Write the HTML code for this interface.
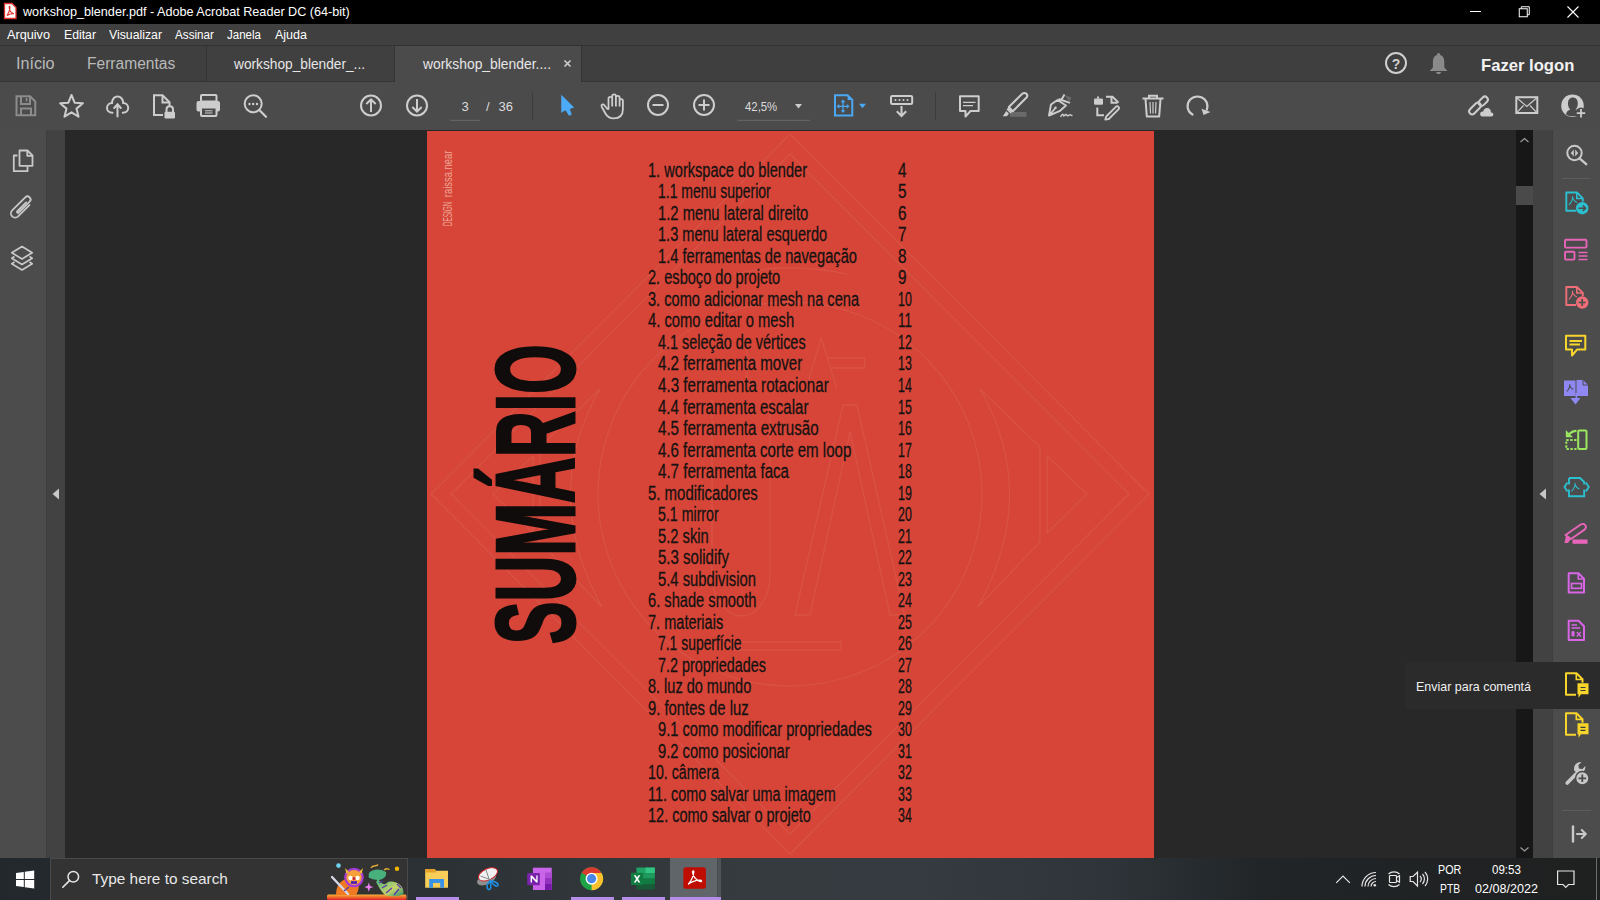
<!DOCTYPE html>
<html><head><meta charset="utf-8"><style>*{margin:0;padding:0;box-sizing:border-box}
html,body{width:1600px;height:900px;overflow:hidden;background:#282828;font-family:"Liberation Sans",sans-serif}
.a{position:absolute}
.t{white-space:nowrap;line-height:1}
svg.a{overflow:visible}
</style></head><body>
<div class="a" style="left:0px;top:0px;width:1600px;height:24px;background:#000;"></div>
<div class="a" style="left:0px;top:24px;width:1600px;height:21px;background:#404040;"></div>
<div class="a" style="left:0px;top:45px;width:1600px;height:1px;background:#333;"></div>
<div class="a" style="left:0px;top:46px;width:1600px;height:36px;background:#3f3f3f;"></div>
<div class="a" style="left:206px;top:46px;width:188px;height:36px;background:#404040;border-left:1px solid #343434;"></div>
<div class="a" style="left:394px;top:46px;width:188px;height:36px;background:#4b4b4b;border-left:1px solid #343434;border-right:1px solid #343434;"></div>
<div class="a" style="left:0px;top:81px;width:394px;height:1px;background:#343434;"></div>
<div class="a" style="left:582px;top:81px;width:1018px;height:1px;background:#343434;"></div>
<div class="a" style="left:0px;top:82px;width:1600px;height:48px;background:#4b4b4b;"></div>
<div class="a" style="left:0px;top:130px;width:46px;height:728px;background:#4c4c4c;"></div>
<div class="a" style="left:46px;top:130px;width:1px;height:728px;background:#3e3e3e;"></div>
<div class="a" style="left:47px;top:130px;width:18px;height:728px;background:#424242;"></div>
<div class="a" style="left:65px;top:130px;width:1450px;height:728px;background:#282828;"></div>
<div class="a" style="left:1516px;top:130px;width:17px;height:728px;background:#171717;"></div>
<div class="a" style="left:1516px;top:186px;width:17px;height:19px;background:#4a4a4a;"></div>
<div class="a" style="left:1533px;top:130px;width:19px;height:728px;background:#424242;"></div>
<div class="a" style="left:1552px;top:130px;width:1px;height:728px;background:#3e3e3e;"></div>
<div class="a" style="left:1553px;top:130px;width:47px;height:728px;background:#4c4c4c;"></div>
<div class="a" style="left:427px;top:131px;width:727px;height:727px;background:#d64537;overflow:hidden"></div>
<svg class="a" style="left:427px;top:131px" width="727" height="727" viewBox="427 131 727 727"><g fill="none" stroke="rgba(255,255,255,0.07)" stroke-width="1.3"><path d="M790,134 L1149,494 L790,854 L431,494 Z"/><path d="M790,154 L1129,494 L790,834 L451,494 Z"/><circle cx="790" cy="494" r="192"/><path d="M980,389 Q1040,494 978,607 M980,389 L1040,447 L1040,542 L978,607 M1047,456 L1087,494 L1047,533 Z"/><path d="M600,389 Q540,494 602,607 M600,389 L540,447 L540,542 L602,607 M533,456 L493,494 L533,533 Z"/><path d="M733,274 Q790,262 847,274"/><path d="M795,615 L843,405 H857 L904.5,615 H890 L850,432 L810,615 Z"/><path d="M712,400 V575 C712,600 728,616 741,616 C756,616 770,600 770,575 V400"/><path d="M806,388 L821.3,338 L836.7,388 M827,358 H864.7 V368 H830 M747,348 V388 M735,642 H841 V650 H735 Z"/></g></svg>
<div class="a t" style="left:647.8px;top:160.79px;font-size:19.5px;color:#141212;font-weight:400;transform:scaleX(0.7483);transform-origin:0 0;-webkit-text-stroke:0.28px #141212;">1. workspace do blender</div>
<div class="a t" style="left:898.3px;top:160.79px;font-size:19.5px;color:#141212;font-weight:400;transform:scaleX(0.7837);transform-origin:0 0;-webkit-text-stroke:0.28px #141212;">4</div>
<div class="a t" style="left:658.3px;top:182.31px;font-size:19.5px;color:#141212;font-weight:400;transform:scaleX(0.7170);transform-origin:0 0;-webkit-text-stroke:0.28px #141212;">1.1 menu superior</div>
<div class="a t" style="left:898.3px;top:182.31px;font-size:19.5px;color:#141212;font-weight:400;transform:scaleX(0.7837);transform-origin:0 0;-webkit-text-stroke:0.28px #141212;">5</div>
<div class="a t" style="left:658.3px;top:203.83px;font-size:19.5px;color:#141212;font-weight:400;transform:scaleX(0.7572);transform-origin:0 0;-webkit-text-stroke:0.28px #141212;">1.2 menu lateral direito</div>
<div class="a t" style="left:898.3px;top:203.83px;font-size:19.5px;color:#141212;font-weight:400;transform:scaleX(0.7837);transform-origin:0 0;-webkit-text-stroke:0.28px #141212;">6</div>
<div class="a t" style="left:658.3px;top:225.35px;font-size:19.5px;color:#141212;font-weight:400;transform:scaleX(0.7463);transform-origin:0 0;-webkit-text-stroke:0.28px #141212;">1.3 menu lateral esquerdo</div>
<div class="a t" style="left:898.3px;top:225.35px;font-size:19.5px;color:#141212;font-weight:400;transform:scaleX(0.7837);transform-origin:0 0;-webkit-text-stroke:0.28px #141212;">7</div>
<div class="a t" style="left:658.3px;top:246.87px;font-size:19.5px;color:#141212;font-weight:400;transform:scaleX(0.7523);transform-origin:0 0;-webkit-text-stroke:0.28px #141212;">1.4 ferramentas de navegação</div>
<div class="a t" style="left:898.3px;top:246.87px;font-size:19.5px;color:#141212;font-weight:400;transform:scaleX(0.7837);transform-origin:0 0;-webkit-text-stroke:0.28px #141212;">8</div>
<div class="a t" style="left:647.8px;top:268.39px;font-size:19.5px;color:#141212;font-weight:400;transform:scaleX(0.7481);transform-origin:0 0;-webkit-text-stroke:0.28px #141212;">2. esboço do projeto</div>
<div class="a t" style="left:898.3px;top:268.39px;font-size:19.5px;color:#141212;font-weight:400;transform:scaleX(0.7837);transform-origin:0 0;-webkit-text-stroke:0.28px #141212;">9</div>
<div class="a t" style="left:647.8px;top:289.91px;font-size:19.5px;color:#141212;font-weight:400;transform:scaleX(0.7487);transform-origin:0 0;-webkit-text-stroke:0.28px #141212;">3. como adicionar mesh na cena</div>
<div class="a t" style="left:898.3px;top:289.91px;font-size:19.5px;color:#141212;font-weight:400;transform:scaleX(0.6362);transform-origin:0 0;-webkit-text-stroke:0.28px #141212;">10</div>
<div class="a t" style="left:647.8px;top:311.43px;font-size:19.5px;color:#141212;font-weight:400;transform:scaleX(0.7578);transform-origin:0 0;-webkit-text-stroke:0.28px #141212;">4. como editar o mesh</div>
<div class="a t" style="left:898.3px;top:311.43px;font-size:19.5px;color:#141212;font-weight:400;transform:scaleX(0.6817);transform-origin:0 0;-webkit-text-stroke:0.28px #141212;">11</div>
<div class="a t" style="left:658.3px;top:332.95px;font-size:19.5px;color:#141212;font-weight:400;transform:scaleX(0.7400);transform-origin:0 0;-webkit-text-stroke:0.28px #141212;">4.1 seleção de vértices</div>
<div class="a t" style="left:898.3px;top:332.95px;font-size:19.5px;color:#141212;font-weight:400;transform:scaleX(0.6362);transform-origin:0 0;-webkit-text-stroke:0.28px #141212;">12</div>
<div class="a t" style="left:658.3px;top:354.47px;font-size:19.5px;color:#141212;font-weight:400;transform:scaleX(0.7735);transform-origin:0 0;-webkit-text-stroke:0.28px #141212;">4.2 ferramenta mover</div>
<div class="a t" style="left:898.3px;top:354.47px;font-size:19.5px;color:#141212;font-weight:400;transform:scaleX(0.6362);transform-origin:0 0;-webkit-text-stroke:0.28px #141212;">13</div>
<div class="a t" style="left:658.3px;top:375.99px;font-size:19.5px;color:#141212;font-weight:400;transform:scaleX(0.7796);transform-origin:0 0;-webkit-text-stroke:0.28px #141212;">4.3 ferramenta rotacionar</div>
<div class="a t" style="left:898.3px;top:375.99px;font-size:19.5px;color:#141212;font-weight:400;transform:scaleX(0.6362);transform-origin:0 0;-webkit-text-stroke:0.28px #141212;">14</div>
<div class="a t" style="left:658.3px;top:397.51px;font-size:19.5px;color:#141212;font-weight:400;transform:scaleX(0.7709);transform-origin:0 0;-webkit-text-stroke:0.28px #141212;">4.4 ferramenta escalar</div>
<div class="a t" style="left:898.3px;top:397.51px;font-size:19.5px;color:#141212;font-weight:400;transform:scaleX(0.6362);transform-origin:0 0;-webkit-text-stroke:0.28px #141212;">15</div>
<div class="a t" style="left:658.3px;top:419.03px;font-size:19.5px;color:#141212;font-weight:400;transform:scaleX(0.7762);transform-origin:0 0;-webkit-text-stroke:0.28px #141212;">4.5 ferramenta extrusão</div>
<div class="a t" style="left:898.3px;top:419.03px;font-size:19.5px;color:#141212;font-weight:400;transform:scaleX(0.6362);transform-origin:0 0;-webkit-text-stroke:0.28px #141212;">16</div>
<div class="a t" style="left:658.3px;top:440.55px;font-size:19.5px;color:#141212;font-weight:400;transform:scaleX(0.7720);transform-origin:0 0;-webkit-text-stroke:0.28px #141212;">4.6 ferramenta corte em loop</div>
<div class="a t" style="left:898.3px;top:440.55px;font-size:19.5px;color:#141212;font-weight:400;transform:scaleX(0.6362);transform-origin:0 0;-webkit-text-stroke:0.28px #141212;">17</div>
<div class="a t" style="left:658.3px;top:462.07px;font-size:19.5px;color:#141212;font-weight:400;transform:scaleX(0.7747);transform-origin:0 0;-webkit-text-stroke:0.28px #141212;">4.7 ferramenta faca</div>
<div class="a t" style="left:898.3px;top:462.07px;font-size:19.5px;color:#141212;font-weight:400;transform:scaleX(0.6362);transform-origin:0 0;-webkit-text-stroke:0.28px #141212;">18</div>
<div class="a t" style="left:647.8px;top:483.59px;font-size:19.5px;color:#141212;font-weight:400;transform:scaleX(0.7667);transform-origin:0 0;-webkit-text-stroke:0.28px #141212;">5. modificadores</div>
<div class="a t" style="left:898.3px;top:483.59px;font-size:19.5px;color:#141212;font-weight:400;transform:scaleX(0.6362);transform-origin:0 0;-webkit-text-stroke:0.28px #141212;">19</div>
<div class="a t" style="left:658.3px;top:505.11px;font-size:19.5px;color:#141212;font-weight:400;transform:scaleX(0.7275);transform-origin:0 0;-webkit-text-stroke:0.28px #141212;">5.1 mirror</div>
<div class="a t" style="left:898.3px;top:505.11px;font-size:19.5px;color:#141212;font-weight:400;transform:scaleX(0.6362);transform-origin:0 0;-webkit-text-stroke:0.28px #141212;">20</div>
<div class="a t" style="left:658.3px;top:526.63px;font-size:19.5px;color:#141212;font-weight:400;transform:scaleX(0.7544);transform-origin:0 0;-webkit-text-stroke:0.28px #141212;">5.2 skin</div>
<div class="a t" style="left:898.3px;top:526.63px;font-size:19.5px;color:#141212;font-weight:400;transform:scaleX(0.6362);transform-origin:0 0;-webkit-text-stroke:0.28px #141212;">21</div>
<div class="a t" style="left:658.3px;top:548.15px;font-size:19.5px;color:#141212;font-weight:400;transform:scaleX(0.7696);transform-origin:0 0;-webkit-text-stroke:0.28px #141212;">5.3 solidify</div>
<div class="a t" style="left:898.3px;top:548.15px;font-size:19.5px;color:#141212;font-weight:400;transform:scaleX(0.6362);transform-origin:0 0;-webkit-text-stroke:0.28px #141212;">22</div>
<div class="a t" style="left:658.3px;top:569.67px;font-size:19.5px;color:#141212;font-weight:400;transform:scaleX(0.7589);transform-origin:0 0;-webkit-text-stroke:0.28px #141212;">5.4 subdivision</div>
<div class="a t" style="left:898.3px;top:569.67px;font-size:19.5px;color:#141212;font-weight:400;transform:scaleX(0.6362);transform-origin:0 0;-webkit-text-stroke:0.28px #141212;">23</div>
<div class="a t" style="left:647.8px;top:591.19px;font-size:19.5px;color:#141212;font-weight:400;transform:scaleX(0.7519);transform-origin:0 0;-webkit-text-stroke:0.28px #141212;">6. shade smooth</div>
<div class="a t" style="left:898.3px;top:591.19px;font-size:19.5px;color:#141212;font-weight:400;transform:scaleX(0.6362);transform-origin:0 0;-webkit-text-stroke:0.28px #141212;">24</div>
<div class="a t" style="left:647.8px;top:612.71px;font-size:19.5px;color:#141212;font-weight:400;transform:scaleX(0.7461);transform-origin:0 0;-webkit-text-stroke:0.28px #141212;">7. materiais</div>
<div class="a t" style="left:898.3px;top:612.71px;font-size:19.5px;color:#141212;font-weight:400;transform:scaleX(0.6362);transform-origin:0 0;-webkit-text-stroke:0.28px #141212;">25</div>
<div class="a t" style="left:658.3px;top:634.23px;font-size:19.5px;color:#141212;font-weight:400;transform:scaleX(0.7133);transform-origin:0 0;-webkit-text-stroke:0.28px #141212;">7.1 superfície</div>
<div class="a t" style="left:898.3px;top:634.23px;font-size:19.5px;color:#141212;font-weight:400;transform:scaleX(0.6362);transform-origin:0 0;-webkit-text-stroke:0.28px #141212;">26</div>
<div class="a t" style="left:658.3px;top:655.75px;font-size:19.5px;color:#141212;font-weight:400;transform:scaleX(0.7372);transform-origin:0 0;-webkit-text-stroke:0.28px #141212;">7.2 propriedades</div>
<div class="a t" style="left:898.3px;top:655.75px;font-size:19.5px;color:#141212;font-weight:400;transform:scaleX(0.6362);transform-origin:0 0;-webkit-text-stroke:0.28px #141212;">27</div>
<div class="a t" style="left:647.8px;top:677.27px;font-size:19.5px;color:#141212;font-weight:400;transform:scaleX(0.7437);transform-origin:0 0;-webkit-text-stroke:0.28px #141212;">8. luz do mundo</div>
<div class="a t" style="left:898.3px;top:677.27px;font-size:19.5px;color:#141212;font-weight:400;transform:scaleX(0.6362);transform-origin:0 0;-webkit-text-stroke:0.28px #141212;">28</div>
<div class="a t" style="left:647.8px;top:698.79px;font-size:19.5px;color:#141212;font-weight:400;transform:scaleX(0.7607);transform-origin:0 0;-webkit-text-stroke:0.28px #141212;">9. fontes de luz</div>
<div class="a t" style="left:898.3px;top:698.79px;font-size:19.5px;color:#141212;font-weight:400;transform:scaleX(0.6362);transform-origin:0 0;-webkit-text-stroke:0.28px #141212;">29</div>
<div class="a t" style="left:658.3px;top:720.31px;font-size:19.5px;color:#141212;font-weight:400;transform:scaleX(0.7532);transform-origin:0 0;-webkit-text-stroke:0.28px #141212;">9.1 como modificar propriedades</div>
<div class="a t" style="left:898.3px;top:720.31px;font-size:19.5px;color:#141212;font-weight:400;transform:scaleX(0.6362);transform-origin:0 0;-webkit-text-stroke:0.28px #141212;">30</div>
<div class="a t" style="left:658.3px;top:741.83px;font-size:19.5px;color:#141212;font-weight:400;transform:scaleX(0.7547);transform-origin:0 0;-webkit-text-stroke:0.28px #141212;">9.2 como posicionar</div>
<div class="a t" style="left:898.3px;top:741.83px;font-size:19.5px;color:#141212;font-weight:400;transform:scaleX(0.6362);transform-origin:0 0;-webkit-text-stroke:0.28px #141212;">31</div>
<div class="a t" style="left:647.8px;top:763.35px;font-size:19.5px;color:#141212;font-weight:400;transform:scaleX(0.7289);transform-origin:0 0;-webkit-text-stroke:0.28px #141212;">10. câmera</div>
<div class="a t" style="left:898.3px;top:763.35px;font-size:19.5px;color:#141212;font-weight:400;transform:scaleX(0.6362);transform-origin:0 0;-webkit-text-stroke:0.28px #141212;">32</div>
<div class="a t" style="left:647.8px;top:784.87px;font-size:19.5px;color:#141212;font-weight:400;transform:scaleX(0.7384);transform-origin:0 0;-webkit-text-stroke:0.28px #141212;">11. como salvar uma imagem</div>
<div class="a t" style="left:898.3px;top:784.87px;font-size:19.5px;color:#141212;font-weight:400;transform:scaleX(0.6362);transform-origin:0 0;-webkit-text-stroke:0.28px #141212;">33</div>
<div class="a t" style="left:647.8px;top:806.39px;font-size:19.5px;color:#141212;font-weight:400;transform:scaleX(0.7440);transform-origin:0 0;-webkit-text-stroke:0.28px #141212;">12. como salvar o projeto</div>
<div class="a t" style="left:898.3px;top:806.39px;font-size:19.5px;color:#141212;font-weight:400;transform:scaleX(0.6362);transform-origin:0 0;-webkit-text-stroke:0.28px #141212;">34</div>
<svg class="a" style="left:0;top:0" width="1600" height="900" viewBox="0 0 1600 900"><text transform="translate(574.1,643.9) rotate(-90) scale(0.5740,1)" font-family="Liberation Sans" font-weight="700" font-size="110.5" fill="#0f0c0b" stroke="#0f0c0b" stroke-width="3">SUMÁRIO</text><text transform="translate(451.9,226) rotate(-90) scale(0.5030,1)" font-family="Liberation Sans" font-size="12.6" fill="#efa598">DESIGN</text><text transform="translate(451.9,197.2) rotate(-90) scale(0.7375,1)" font-family="Liberation Sans" font-size="12.8" fill="#efa598">raissa.near</text></svg>
<div class="a" style="left:1405px;top:662px;width:195px;height:47px;background:#2b2b2b;border-radius:4px 0 0 4px;"></div>
<div class="a" style="left:0px;top:858px;width:1600px;height:42px;background:linear-gradient(90deg,#22282b 0px,#272d30 300px,#353b3f 750px,#353b40 920px,#2e3439 1110px,#212528 1260px,#1f2020 1600px);"></div>
<div class="a" style="left:50px;top:858px;width:358px;height:42px;background:#333333;border:1px solid #4a4a4a;border-bottom:none;"></div>
<div class="a" style="left:670px;top:858px;width:47px;height:42px;background:#5f6568;"></div>
<div class="a" style="left:717px;top:858px;width:1px;height:42px;background:#474c50;"></div>
<div class="a" style="left:718px;top:858px;width:3px;height:42px;background:#4f5458;"></div>
<div class="a" style="left:416px;top:897px;width:43px;height:3px;background:#b48ee9;"></div>
<div class="a" style="left:571px;top:897px;width:43px;height:3px;background:#b48ee9;"></div>
<div class="a" style="left:622px;top:897px;width:43px;height:3px;background:#b48ee9;"></div>
<div class="a" style="left:670px;top:897px;width:51px;height:3px;background:#b48ee9;"></div>
<div class="a" style="left:1595.5px;top:858px;width:1px;height:42px;background:#6e6e6e;"></div>
<div class="a t" style="left:22.5px;top:5.83px;font-size:12.6px;color:#fff;font-weight:400;transform:scaleX(1.0018);transform-origin:0 0;">workshop_blender.pdf - Adobe Acrobat Reader DC (64-bit)</div>
<div class="a t" style="left:7px;top:28.92px;font-size:12.5px;color:#fff;font-weight:400;transform:scaleX(1.0145);transform-origin:0 0;">Arquivo</div>
<div class="a t" style="left:64px;top:28.92px;font-size:12.5px;color:#fff;font-weight:400;transform:scaleX(0.9799);transform-origin:0 0;">Editar</div>
<div class="a t" style="left:109px;top:28.92px;font-size:12.5px;color:#fff;font-weight:400;transform:scaleX(0.9821);transform-origin:0 0;">Visualizar</div>
<div class="a t" style="left:175px;top:28.92px;font-size:12.5px;color:#fff;font-weight:400;transform:scaleX(0.9356);transform-origin:0 0;">Assinar</div>
<div class="a t" style="left:227px;top:28.92px;font-size:12.5px;color:#fff;font-weight:400;transform:scaleX(0.9230);transform-origin:0 0;">Janela</div>
<div class="a t" style="left:275px;top:28.92px;font-size:12.5px;color:#fff;font-weight:400;transform:scaleX(1.0009);transform-origin:0 0;">Ajuda</div>
<div class="a t" style="left:16.2px;top:55.56px;font-size:16px;color:#b9b9b9;font-weight:400;transform:scaleX(1.0093);transform-origin:0 0;">Início</div>
<div class="a t" style="left:87.4px;top:55.56px;font-size:16px;color:#b9b9b9;font-weight:400;transform:scaleX(0.9725);transform-origin:0 0;">Ferramentas</div>
<div class="a t" style="left:234px;top:57.23px;font-size:14.5px;color:#e6e6e6;font-weight:400;transform:scaleX(0.9449);transform-origin:0 0;">workshop_blender_...</div>
<div class="a t" style="left:423px;top:57.23px;font-size:14.5px;color:#e6e6e6;font-weight:400;transform:scaleX(0.9566);transform-origin:0 0;">workshop_blender....</div>
<div class="a t" style="left:1480.7px;top:56.93px;font-size:16.5px;color:#f2f2f2;font-weight:700;transform:scaleX(1.0077);transform-origin:0 0;">Fazer logon</div>
<div class="a t" style="left:461.5px;top:99.70px;font-size:13px;color:#dcdcdc;font-weight:400;">3</div>
<div class="a t" style="left:486px;top:99.70px;font-size:13px;color:#dcdcdc;font-weight:400;">/</div>
<div class="a t" style="left:498.6px;top:99.70px;font-size:13px;color:#dcdcdc;font-weight:400;">36</div>
<div class="a t" style="left:745px;top:99.70px;font-size:13px;color:#dcdcdc;font-weight:400;transform:scaleX(0.8735);transform-origin:0 0;">42,5%</div>
<div class="a t" style="left:1416px;top:680.00px;font-size:13px;color:#f0f0f0;font-weight:400;transform:scaleX(0.9587);transform-origin:0 0;">Enviar para comentá</div>
<div class="a t" style="left:92.25px;top:872.06px;font-size:14.4px;color:#e8e8e8;font-weight:400;transform:scaleX(1.0685);transform-origin:0 0;">Type here to search</div>
<div class="a t" style="left:1437.6px;top:864.02px;font-size:12.5px;color:#fff;font-weight:400;transform:scaleX(0.8602);transform-origin:0 0;">POR</div>
<div class="a t" style="left:1439.9px;top:882.57px;font-size:12.5px;color:#fff;font-weight:400;transform:scaleX(0.8268);transform-origin:0 0;">PTB</div>
<div class="a t" style="left:1491.5px;top:864.02px;font-size:12.5px;color:#fff;font-weight:400;transform:scaleX(0.9239);transform-origin:0 0;">09:53</div>
<div class="a t" style="left:1474.9px;top:882.57px;font-size:12.5px;color:#fff;font-weight:400;transform:scaleX(1.0070);transform-origin:0 0;">02/08/2022</div>
<svg class="a" style="left:0;top:0" width="1600" height="900" viewBox="0 0 1600 900"><path d="M4.5,3.5 H12 L16,7.5 V18.5 H4.5 Z" fill="#fff" stroke="#e0332e" stroke-width="1.3"/><path d="M7,15.5 C8.5,13 10,9.5 10,7.2 C10,6 9.2,6 9.2,7.2 C9.3,10 11,13 14,13.8 C12,13.5 9,14 7,15.5 Z" fill="none" stroke="#e0332e" stroke-width="1.1"/><path d="M1470,11.5 H1481" stroke="#fff" stroke-width="1"/><rect x="1519.25" y="8.75" width="8" height="8" fill="none" stroke="#fff" stroke-width="1"/><path d="M1521.25,8.75 V6.75 H1529.25 V14.75 H1527.25" fill="none" stroke="#fff" stroke-width="1"/><path d="M1567.5,6.5 L1578.5,17.5 M1578.5,6.5 L1567.5,17.5" stroke="#fff" stroke-width="1.1"/><path d="M564.5,60.5 L570.5,66.5 M570.5,60.5 L564.5,66.5" stroke="#cfcfcf" stroke-width="1.6"/><circle cx="1396" cy="63" r="10" fill="none" stroke="#cfcfcf" stroke-width="2"/><text x="1396" y="68.5" font-family="Liberation Sans" font-weight="700" font-size="14" fill="#cfcfcf" text-anchor="middle">?</text><path d="M1438.6,53 C1439.8,53 1440.2,54 1440.2,55 C1443.5,56 1444.3,59 1444.3,62.5 V67.5 L1447.6,71 H1429.6 L1432.9,67.5 V62.5 C1432.9,59 1433.7,56 1437,55 C1437,54 1437.4,53 1438.6,53 Z" fill="#8a8a8a"/><path d="M1436.2,72 H1441 C1441,73.5 1440,74 1438.6,74 C1437.2,74 1436.2,73.5 1436.2,72 Z" fill="#8a8a8a"/><g fill="none" stroke="#8c8c8c" stroke-width="2"><path d="M16.5,96.25 H30 L35.25,101.5 V115.25 H16.5 Z"/><path d="M21,96.5 V104 H30 V96.5"/><path d="M21,115 V108.5 H31 V115"/></g><rect x="25.8" y="98" width="1.6" height="3.5" fill="#8c8c8c"/><path d="M71.50,95.00 L74.62,102.71 L82.91,103.29 L76.54,108.64 L78.55,116.71 L71.50,112.30 L64.45,116.71 L66.46,108.64 L60.09,103.29 L68.38,102.71 Z" fill="none" stroke="#cdcdcd" stroke-width="2" stroke-linejoin="round"/><g fill="none" stroke="#cdcdcd" stroke-width="2" stroke-linecap="round"><path d="M112.5,112.8 C108.5,112.8 107,110 107,108 C107,105 109.3,103 112,103 C112,99 114.7,96.5 117.5,96.5 C120.5,96.5 123.2,99 123.2,103 C126,103 128.2,105 128.2,108 C128.2,110.5 126.3,112.8 122.8,112.8"/><path d="M117.5,116.5 V104.5 M114.2,108 L117.5,104.3 L120.8,108"/></g><g fill="none" stroke="#cdcdcd" stroke-width="2"><path d="M163,115 H154 V95.25 H162.5 L169.5,102.2 V106"/><path d="M162.5,95.5 V102.5 H169.5"/></g><rect x="164.5" y="111.8" width="10.5" height="6.7" rx="1" fill="#cdcdcd"/><path d="M166.5,112 V109.5 C166.5,107.5 168,106.3 169.75,106.3 C171.5,106.3 173,107.5 173,109.5 V112" fill="none" stroke="#cdcdcd" stroke-width="2"/><g fill="none" stroke="#cdcdcd" stroke-width="2"><rect x="201" y="95" width="15.5" height="6.5" rx="1"/><rect x="201" y="107.5" width="15.5" height="8.5" rx="1"/></g><path d="M198.5,101 H218 A2,2 0 0 1 220,103 V109.5 A2,2 0 0 1 218,111.5 H216.5 V107 H201 V111.5 H198.5 A2,2 0 0 1 196.5,109.5 V103 A2,2 0 0 1 198.5,101 Z" fill="#cdcdcd"/><path d="M205,110.8 H212.5 M205,113 H212.5" stroke="#cdcdcd" stroke-width="1"/><circle cx="253.2" cy="103.8" r="8.5" fill="none" stroke="#cdcdcd" stroke-width="2"/><path d="M259.3,110 L266,116.8" stroke="#cdcdcd" stroke-width="2.2" stroke-linecap="round"/><g fill="#cdcdcd"><circle cx="249.5" cy="104" r="1.2"/><circle cx="253.2" cy="104" r="1.2"/><circle cx="257" cy="104" r="1.2"/></g><circle cx="371" cy="105.5" r="10" fill="none" stroke="#cdcdcd" stroke-width="2"/><path d="M371,112 V99.5 M366.3,104 L371,99.5 L375.7,104" fill="none" stroke="#cdcdcd" stroke-width="2"/><circle cx="417" cy="105.5" r="10" fill="none" stroke="#cdcdcd" stroke-width="2"/><path d="M417,99 V111.5 M412.3,107 L417,111.5 L421.7,107" fill="none" stroke="#cdcdcd" stroke-width="2"/><path d="M450,120.3 H480" stroke="#6a6a6a" stroke-width="1"/><path d="M532.5,92 V120" stroke="#3c3c3c" stroke-width="1"/><path d="M561.25,94.75 V112.75 L565.5,110.2 L569,115.8 L571.8,114.4 L569.8,109 L574.2,107.4 Z" fill="#4daaf7"/><path d="M607.8,109.5 L604.2,105 C603,103.6 600.8,104.8 601.7,106.7 L605.6,113.8 C607.3,117 609.7,118.4 613.6,118.4 C619.5,118.4 622.9,115 622.9,109.2 V100.8 C622.9,98.6 619.6,98.6 619.6,100.8 V106.5 M619.6,106.5 V97.6 C619.6,95.4 615.9,95.4 615.9,97.6 V106.5 M615.9,106.5 V96 C615.9,93.8 612.2,93.8 612.2,96 V106.5 M612.2,106.5 V98.6 C612.2,96.4 608.5,96.4 608.5,98.6 V109.8" fill="none" stroke="#cdcdcd" stroke-width="1.8" stroke-linejoin="round"/><circle cx="658" cy="105" r="10" fill="none" stroke="#cdcdcd" stroke-width="2"/><path d="M652.5,105 H663.5" stroke="#cdcdcd" stroke-width="2"/><circle cx="704" cy="105" r="10" fill="none" stroke="#cdcdcd" stroke-width="2"/><path d="M698.5,105 H709.5 M704,99.5 V110.5" stroke="#cdcdcd" stroke-width="2"/><path d="M737.5,120.3 H810" stroke="#6a6a6a" stroke-width="1"/><path d="M795,104 H802 L798.5,108.5 Z" fill="#cdcdcd"/><path d="M835,95.2 H847.6 L852.3,100 V115.4 H835 Z" fill="none" stroke="#4aa8f5" stroke-width="2"/><path d="M847.6,95.2 V100 H852.3" fill="#4aa8f5"/><g stroke="#4aa8f5" stroke-width="1.3" fill="none"><path d="M843,101.5 V111 M838.5,106.3 H847.6"/></g><g fill="#4aa8f5"><path d="M840.6,102.3 L843,99.6 L845.4,102.3 Z"/><path d="M840.6,110.3 L843,113 L845.4,110.3 Z"/><path d="M839.3,103.9 L836.6,106.3 L839.3,108.7 Z"/><path d="M846.8,103.9 L849.5,106.3 L846.8,108.7 Z"/></g><path d="M859,103.8 H866 L862.5,108.3 Z" fill="#4aa8f5"/><rect x="891" y="96" width="21.2" height="8" rx="1.3" fill="none" stroke="#cdcdcd" stroke-width="2"/><g fill="#cdcdcd"><circle cx="895.5" cy="100" r="1"/><circle cx="899.5" cy="100" r="1"/><circle cx="903.5" cy="100" r="1"/><circle cx="907.5" cy="100" r="1"/></g><path d="M901.5,106 V116 M896.8,111.3 L901.5,116 L906.2,111.3" fill="none" stroke="#cdcdcd" stroke-width="2"/><path d="M935.5,92 V120" stroke="#3c3c3c" stroke-width="1"/><path d="M960,96.3 H978.7 V111 H970.5 L965.5,116.5 V111 H960 Z" fill="none" stroke="#cdcdcd" stroke-width="2" stroke-linejoin="round"/><path d="M963,102.3 H975.5 M963,105.6 H973" stroke="#cdcdcd" stroke-width="1.2"/><path d="M1010,112 H1026.5 V116.8 H1010 Z" fill="#6a6a6a"/><path d="M1008.8,107 L1022.3,93.8 C1023.5,92.6 1025.3,92.6 1026.4,93.8 C1027.5,95 1027.5,96.6 1026.3,97.8 L1012.8,111.2 Z" fill="none" stroke="#cdcdcd" stroke-width="2" stroke-linejoin="round"/><path d="M1008.8,107 L1012.8,111.2 L1010.5,113.5 L1006.5,109.5 Z M1006.3,111 L1009,113.8 L1006.8,116.3 L1002.8,116.3 Z" fill="#cdcdcd"/><path d="M1064.5,94.5 L1061,100.5 M1058.5,99 L1070,102.8 M1057.5,100 L1051,104.5 L1049,115.5 L1059.5,111.2 L1066,105.5 Z M1049.5,115 L1055,108.5" fill="none" stroke="#cdcdcd" stroke-width="1.9" stroke-linejoin="round"/><path d="M1065,95 L1071.5,97.5 L1069,102 Z" fill="#6a6a6a"/><circle cx="1055.5" cy="107.7" r="1.3" fill="#cdcdcd"/><path d="M1060.5,116.8 C1062,114 1063,113.5 1063.5,115.5 C1064,117 1065,114 1066,114.5 C1067,115 1067.5,117 1069,115 C1070,114 1071,115.5 1072.5,115.5" fill="none" stroke="#cdcdcd" stroke-width="1.4"/><path d="M1106,96.8 H1112.5 L1118.5,102.6" fill="none" stroke="#cdcdcd" stroke-width="2"/><path d="M1111.5,96.5 V102.8 H1117.5" fill="none" stroke="#cdcdcd" stroke-width="2"/><rect x="1094" y="98.6" width="9" height="6.2" rx="1.3" fill="#cdcdcd"/><path d="M1098,96.5 V98.6" stroke="#cdcdcd" stroke-width="2"/><path d="M1097.3,107.5 V115.3 H1104" fill="none" stroke="#cdcdcd" stroke-width="2"/><path d="M1106.2,116.5 L1115.8,106.8 C1116.6,106 1117.8,106 1118.5,106.8 C1119.2,107.5 1119.2,108.6 1118.4,109.4 L1108.8,119 L1105.3,119.6 Z" fill="none" stroke="#cdcdcd" stroke-width="1.8" stroke-linejoin="round"/><path d="M1142.5,98.5 H1163.5" stroke="#cdcdcd" stroke-width="2"/><path d="M1149,98 V95.8 H1157 V98" fill="none" stroke="#cdcdcd" stroke-width="2"/><path d="M1145.5,99 L1146.8,116.5 H1159.2 L1160.5,99" fill="none" stroke="#cdcdcd" stroke-width="2" stroke-linejoin="round"/><path d="M1150,102 L1150.5,113.5 M1153,102 V113.5 M1156,102 L1155.5,113.5" stroke="#cdcdcd" stroke-width="1.2"/><path d="M1192.5,114.5 C1189.5,112.8 1187.6,109.8 1187.6,106.3 C1187.6,100.8 1192,96.5 1197.5,96.5 C1203,96.5 1207.4,100.8 1207.4,106.3 C1207.4,107.5 1207.2,108.6 1206.8,109.6" fill="none" stroke="#cdcdcd" stroke-width="2.2" stroke-linecap="round"/><path d="M1201.5,108.8 L1210.5,112 L1203.5,115 Z" fill="#cdcdcd"/><g fill="none" stroke="#cdcdcd" stroke-width="2"><rect x="1478" y="98.2" width="10.5" height="6" rx="3" transform="rotate(-45 1483.25 101.2)"/><rect x="1468" y="105.5" width="14" height="6" rx="3" transform="rotate(-45 1475 108.5)"/></g><path d="M1482,117 H1491.5 C1493,117 1494,116 1494,114.5 C1494,113 1493,112 1491.5,112 C1491.5,109.5 1489.5,107.5 1487,107.5 C1484.8,107.5 1483.3,109 1482.8,110.8 C1481,110.8 1479.5,112 1479.5,114 C1479.5,115.8 1480.5,117 1482,117 Z" fill="#cdcdcd" stroke="#4b4b4b" stroke-width="1.2"/><rect x="1516.3" y="97.2" width="21" height="15.8" fill="none" stroke="#cdcdcd" stroke-width="2"/><path d="M1517,98 L1526.8,106.5 L1536.6,98 M1517,112.3 L1523.5,105.5 M1536.6,112.3 L1530,105.5" fill="none" stroke="#cdcdcd" stroke-width="1.2"/><circle cx="1572.5" cy="105.8" r="11.3" fill="#cdcdcd"/><path d="M1566,114.5 C1566.3,111.5 1568,110.2 1570.3,109.4 C1568.6,108 1568,106 1568,103.3 C1568,99.7 1570.2,97.6 1572.9,97.6 C1575.6,97.6 1577.8,99.7 1577.8,103.3 C1577.8,106 1577.2,108 1575.5,109.4 C1577.8,110.2 1580,111.5 1580.6,114.5 C1578.5,115.8 1575.8,116.3 1572.9,116.3 C1570,116.3 1567.8,115.8 1566,114.5 Z" fill="#4b4b4b"/><circle cx="1581" cy="113.2" r="5.6" fill="#4b4b4b"/><path d="M1576.8,113.2 H1585.2 M1581,109 V117.4" stroke="#cdcdcd" stroke-width="1.8"/><g fill="none" stroke="#c8c8c8" stroke-width="1.8" stroke-linejoin="round"><path d="M17.5,155.5 H13.8 V171.2 H27.5 V166.5"/><path d="M19.5,150.5 H27.5 L32.5,155.5 V165.8 H19.5 Z"/><path d="M27.3,150.5 V155.8 H32.5"/></g><path transform="translate(21.5,207) rotate(-45)" d="M7,4.2 H-9 A4.2,4.2 0 0 1 -9,-4.2 H9.5 A3.1,3.1 0 0 1 9.5,2 H-6 A1,1 0 0 1 -6,0 H6.5" fill="none" stroke="#c8c8c8" stroke-width="1.8" stroke-linecap="round"/><g fill="none" stroke="#c8c8c8" stroke-width="1.7" stroke-linejoin="round"><path d="M22,246.5 L32.2,252.7 L22,258.9 L11.8,252.7 Z"/><path d="M14.5,256.5 L11.8,258.2 L22,264.4 L32.2,258.2 L29.5,256.5"/><path d="M14.5,262 L11.8,263.7 L22,269.9 L32.2,263.7 L29.5,262"/></g><path d="M59,488.5 V499.5 L52.5,494 Z" fill="#c8c8c8"/><path d="M1520.5,142 L1524.5,138.5 L1528.5,142 M1520.5,847.5 L1524.5,851 L1528.5,847.5" fill="none" stroke="#9a9a9a" stroke-width="1.2"/><path d="M1546,488.5 V499.5 L1539.5,494 Z" fill="#c8c8c8"/><circle cx="1574.5" cy="153" r="7.2" fill="none" stroke="#c8c8c8" stroke-width="2"/><path d="M1579.5,158.3 L1586.2,164.2" stroke="#c8c8c8" stroke-width="2.4" stroke-linecap="round"/><path d="M1573.8,149.5 L1570.8,153 L1573.8,156.5 Z M1575.2,149.5 L1578.2,153 L1575.2,156.5 Z" fill="#c8c8c8"/><path d="M1562,178.5 H1590.5" stroke="#5c5c5c" stroke-width="1"/><path d="M1576,210.8 H1566.3 V192.5 H1577 L1582.8,198.3 V201.5" fill="none" stroke="#2cbfd0" stroke-width="1.9" stroke-linejoin="round"/><path d="M1576.8,192.5 V198.5 H1582.8" fill="none" stroke="#2cbfd0" stroke-width="1.6"/><path d="M1569,205 C1571.5,202 1573,198.5 1572.5,196.3 C1572.2,198.3 1574,201.5 1577,202.5" fill="none" stroke="#2cbfd0" stroke-width="1.1"/><circle cx="1582.2" cy="208.2" r="6.2" fill="#2cbfd0"/><path d="M1578.5,208.2 H1585 M1582.8,205.5 L1585.5,208.2 L1582.8,210.9" fill="none" stroke="#4c4c4c" stroke-width="1.6"/><g fill="none" stroke="#e864b8" stroke-width="1.9"><rect x="1565" y="239.8" width="21.5" height="7.8" rx="1"/><rect x="1565" y="251.8" width="9.5" height="7.8" rx="1"/></g><path d="M1578.5,252.5 H1587.5 M1578.5,256 H1587.5 M1578.5,259.5 H1587.5" stroke="#e864b8" stroke-width="1.3"/><path d="M1576,305 H1566.3 V287 H1577 L1582.8,292.8 V296" fill="none" stroke="#f06e78" stroke-width="1.9" stroke-linejoin="round"/><path d="M1576.8,287 V293 H1582.8" fill="none" stroke="#f06e78" stroke-width="1.6"/><path d="M1569,299.5 C1571.5,296.5 1573,293 1572.5,290.8 C1572.2,292.8 1574,296 1577,297" fill="none" stroke="#f06e78" stroke-width="1.1"/><circle cx="1582.2" cy="302.5" r="6.2" fill="#f06e78"/><path d="M1578.7,302.5 H1585.7 M1582.2,299 V306" stroke="#4c4c4c" stroke-width="1.7"/><path d="M1566,335.8 H1585.3 V349.6 H1577 L1572,355.5 V349.6 H1566 Z" fill="none" stroke="#f7d52b" stroke-width="2" stroke-linejoin="round"/><path d="M1569.5,341 H1582 M1569.5,344.5 H1580" stroke="#f7d52b" stroke-width="1.8"/><path d="M1564,380.5 H1575.5 V396 H1564 Z" fill="#8f87f2"/><path d="M1567,391.5 C1569,389 1570,386 1569.8,384.3 C1569.6,386 1571,388.5 1573.3,389.3" fill="none" stroke="#4c4c4c" stroke-width="1.1"/><path d="M1576.5,380 H1583 L1588,385 V396 H1576.5 Z" fill="#8f87f2"/><path d="M1583,380 V385 H1588" fill="none" stroke="#4c4c4c" stroke-width="1"/><path d="M1575.5,393 V398 H1570.5 L1575.5,404.4 L1580.5,398 H1577.3 V393 Z" fill="#8f87f2"/><rect x="1578.2" y="430.4" width="8.3" height="18.6" rx="1" fill="none" stroke="#9ae65e" stroke-width="2"/><path d="M1576.5,439.9 H1566.3 V449 H1576.5" fill="none" stroke="#9ae65e" stroke-width="2" stroke-dasharray="2.4,1.5"/><path d="M1565.8,430 L1565.8,437.3 L1573,437.3 Z" fill="#9ae65e"/><path d="M1568.5,434.8 Q1572,430.8 1576.5,430.8" fill="none" stroke="#9ae65e" stroke-width="2.2"/><path d="M1569,478 H1580 L1584.2,482 V484.5 M1584.2,489.5 V496.3 H1569 V489.5 M1569,484.5 V478" fill="none" stroke="#2cbfd0" stroke-width="1.9"/><path d="M1567.5,482.5 L1564.5,487 L1567.5,491.5 M1585.8,482.5 L1588.8,487 L1585.8,491.5" fill="none" stroke="#2cbfd0" stroke-width="1.9"/><path d="M1571.5,491.5 C1574,488.5 1575.5,485 1575,483 C1574.7,485 1576.5,488 1579.5,489" fill="none" stroke="#2cbfd0" stroke-width="1.1"/><path d="M1565.5,535 L1580.8,524.5 C1582.3,523.5 1584.3,523.8 1585.3,525.3 C1586.3,526.8 1586,528.7 1584.5,529.7 L1571,539 Z" fill="none" stroke="#e864b8" stroke-width="2" stroke-linejoin="round"/><path d="M1566,535.5 L1570.5,539.5 L1568,543 H1564.5 Z" fill="#e864b8"/><path d="M1572.5,539.5 H1587.5 V543.8 H1572.5 Z" fill="#e864b8"/><path d="M1568.7,573.3 H1578.5 L1584,578.8 V592.4 H1568.7 Z" fill="none" stroke="#d865e6" stroke-width="2" stroke-linejoin="round"/><path d="M1578.3,573.5 V579 H1583.8" fill="none" stroke="#d865e6" stroke-width="1.6"/><rect x="1571.5" y="583.5" width="10" height="4.8" fill="none" stroke="#d865e6" stroke-width="1.7"/><path d="M1568.7,620.8 H1578.5 L1584,626.3 V639.9 H1568.7 Z" fill="none" stroke="#d865e6" stroke-width="2" stroke-linejoin="round"/><path d="M1571.5,625 H1577 M1571.5,628 H1580" stroke="#d865e6" stroke-width="1.3"/><rect x="1571.5" y="631" width="3" height="5.5" rx="1.2" fill="#d865e6"/><path d="M1576.8,632 L1580.8,636.5 M1580.8,632 L1576.8,636.5" stroke="#d865e6" stroke-width="1.3"/><path d="M1576,694.8 H1566 V673.3 H1576.5 L1582.5,679.3 V682.8" fill="none" stroke="#f7d52b" stroke-width="2" stroke-linejoin="round"/><path d="M1576.3,673.3 V679.5 H1582.5" fill="none" stroke="#f7d52b" stroke-width="1.6"/><path d="M1577.5,683.3 H1588.5 V694.3 H1581 L1578.5,697.8 V694.3 H1577.5 Z" fill="#f7d52b"/><path d="M1580.5,687.5 H1585.5 M1580.5,690.5 H1585.5" stroke="#3a3a3a" stroke-width="1.1"/><path d="M1576,734.7 H1566 V713.2 H1576.5 L1582.5,719.2 V722.7" fill="none" stroke="#f7d52b" stroke-width="2" stroke-linejoin="round"/><path d="M1576.3,713.2 V719.4000000000001 H1582.5" fill="none" stroke="#f7d52b" stroke-width="1.6"/><path d="M1577.5,723.2 H1588.5 V734.2 H1581 L1578.5,737.7 V734.2 H1577.5 Z" fill="#f7d52b"/><path d="M1580.5,727.4000000000001 H1585.5 M1580.5,730.4000000000001 H1585.5" stroke="#3a3a3a" stroke-width="1.1"/><path d="M1567.2,783 L1576.3,773.8" stroke="#c8c8c8" stroke-width="3.6" stroke-linecap="round"/><path d="M1574.2,770.5 C1573.2,766 1576.5,761.5 1581.5,762 L1578.3,765.3 L1579,768.5 L1582.2,769.2 L1585.4,766 C1585.9,771 1581.4,774.3 1577,773.3 Z" fill="#c8c8c8"/><circle cx="1582.3" cy="778.3" r="6.7" fill="#c8c8c8" stroke="#4c4c4c" stroke-width="1.5"/><path d="M1578.5,778.3 H1586.1 M1582.3,774.5 V782.1" stroke="#4c4c4c" stroke-width="1.8"/><path d="M1562,810.5 H1591" stroke="#5c5c5c" stroke-width="1"/><path d="M1573,826.5 V841.5" stroke="#c8c8c8" stroke-width="2.4" stroke-linecap="round"/><path d="M1577,834 H1585.5 M1581.8,830 L1585.8,834 L1581.8,838" fill="none" stroke="#c8c8c8" stroke-width="2" stroke-linecap="round"/><path d="M16,873 L23.8,871.9 V879 H16 Z M24.8,871.8 L34.2,870.5 V879 H24.8 Z M16,880 H23.8 V887.1 L16,886 Z M24.8,880 H34.2 V888.5 L24.8,887.2 Z" fill="#fff"/><circle cx="73.3" cy="876.8" r="5.3" fill="none" stroke="#e6e6e6" stroke-width="1.5"/><path d="M69.5,880.6 L62.8,887.3" stroke="#e6e6e6" stroke-width="1.6" stroke-linecap="round"/><defs><linearGradient id="bar" x1="0" y1="0" x2="0" y2="1"><stop offset="0" stop-color="#f7b43a"/><stop offset="0.5" stop-color="#f06a28"/><stop offset="1" stop-color="#d9262e"/></linearGradient><linearGradient id="drg" x1="0" y1="0" x2="1" y2="1"><stop offset="0" stop-color="#3fb37f"/><stop offset="0.6" stop-color="#c9d36a"/><stop offset="1" stop-color="#2a8f6a"/></linearGradient></defs><rect x="327" y="894.5" width="79.5" height="5.5" rx="1.5" fill="url(#bar)"/><path d="M336,895 C336,886 340,880 347,879 L358,880 C360,886 358,892 356,895 Z" fill="#f07a22"/><circle cx="354" cy="877.5" r="9.8" fill="#a63ad6"/><circle cx="354" cy="877.5" r="7.6" fill="#f5a13a"/><path d="M345,868 L349,872 L346.5,874 Z M363,868 L359,872 L361.5,874 Z" fill="#f0c030"/><circle cx="350.5" cy="878" r="2.2" fill="#fff"/><circle cx="357.5" cy="878" r="2.2" fill="#fff"/><rect x="351" y="881" width="6" height="3" fill="#5a2ab0"/><circle cx="354" cy="878.5" r="1.5" fill="#d0203a"/><path d="M332,877 L348,894" stroke="#d8d8e8" stroke-width="2.4" stroke-linecap="round"/><path d="M344,891 L349,887" stroke="#6040a0" stroke-width="1.5"/><path d="M368.8,882.5 L370,886 L373.3,887.1 L370,888.2 L368.8,891.7 L367.6,888.2 L364.3,887.1 L367.6,886 Z" fill="#e77ff0"/><circle cx="338.5" cy="865.6" r="2.3" fill="#6fd3ee"/><circle cx="397" cy="868.8" r="2.2" fill="#f5b700"/><path d="M369,873 C372,869 380,868 386,872 C387,876 384,879 379,880 C375,880 370,879 368.5,877 Z" fill="#48b07c"/><path d="M371,868 C373,864 377,867 378,864.5 M384,870 C387,868 389,869 389,870" fill="none" stroke="#e6b030" stroke-width="1.5"/><path d="M378,879 C382,884 384,886 388,882 C396,880 404,886 403.5,893 C403,896 396,896.5 388,896 C383,895 380,889 376,882 Z" fill="url(#drg)"/><path d="M379,883 L383,881 M382,888 L387,885 M386,893 L392,888 M394,895 L399,889 M397,884 L401,888" stroke="#5a3ab0" stroke-width="1.3"/><path d="M425.2,869 H434.5 L436,870.8 H448 V887.8 H425.2 Z" fill="#f8cd58"/><path d="M425.2,869 H434.5 L436,870.8 V872.5 H425.2 Z" fill="#e3a128"/><path d="M429.2,879 H444 V887.8 H440.2 V883 H433 V887.8 H429.2 Z" fill="#3a92e6"/><ellipse cx="486.5" cy="879" rx="10.2" ry="5.2" transform="rotate(-25 486.5 879)" fill="#9a9a9a" opacity="0.9"/><ellipse cx="488" cy="874.3" rx="10.3" ry="5.6" transform="rotate(-25 488 874.3)" fill="#f0f0f0" stroke="#c8202a" stroke-width="1"/><path d="M486,870 L490,882 M480.5,876 L491,880" stroke="#888" stroke-width="1"/><path d="M490,881 C487,883 486,888 488.5,889.5 C491,890 491.5,886 490,881 Z M491,881 C494,881 498.5,883 498,885.5 C497,887.5 493,885 491,881 Z" fill="none" stroke="#1e8ee0" stroke-width="1.6"/><rect x="532.9" y="867.7" width="18.8" height="22.3" fill="#ca64ea"/><rect x="545" y="872.5" width="6.7" height="5.5" fill="#ae4bd5"/><rect x="545" y="878" width="6.7" height="6" fill="#9332bf"/><rect x="545" y="884" width="6.7" height="6" fill="#7719aa"/><rect x="527.2" y="873" width="12.7" height="12.2" rx="0.8" fill="#7b22ab"/><path d="M530.6,882.6 V875.6 H532 L536.3,880.3 V875.6 H537.6 V882.6 H536.3 L532,877.9 V882.6 Z" fill="#fff"/><circle cx="591.6" cy="878.7" r="11.5" fill="#1ea446"/><path d="M591.6,878.7 L581.64,872.95 A11.5,11.5 0 0 1 601.56,872.95 Z" fill="#db3a2e"/><path d="M591.6,878.7 L601.56,872.95 A11.5,11.5 0 0 1 591.6,890.2 Z" fill="#fbc02d"/><path d="M591.6,878.7 L581.64,872.95 L586.5,881.5 Z" fill="#1ea446"/><path d="M601.56,872.95 L591.6,872.95 L596.5,878.7 Z" fill="#fbc02d"/><circle cx="591.6" cy="878.7" r="6" fill="#fff"/><circle cx="591.6" cy="878.7" r="4.6" fill="#4a86e8"/><rect x="636.5" y="867.6" width="18.3" height="22" fill="#185c37"/><rect x="636.5" y="867.6" width="18.3" height="5.5" fill="#21a366"/><rect x="645.6" y="867.6" width="9.2" height="5.5" fill="#33c481"/><rect x="636.5" y="873.1" width="18.3" height="5.5" fill="#1e9a5e"/><rect x="636.5" y="878.6" width="18.3" height="5.5" fill="#107c41"/><rect x="631" y="872.8" width="12.1" height="12.2" rx="0.8" fill="#107c41"/><path d="M633.8,875.2 H635.8 L637.1,877.6 L638.4,875.2 H640.3 L638.1,878.9 L640.4,882.6 H638.4 L637.1,880.2 L635.8,882.6 H633.8 L636.1,878.9 Z" fill="#fff"/><rect x="683.4" y="867.2" width="22.5" height="21.5" rx="2.5" fill="#c00d02"/><path d="M688.5,884 C691,881 693.5,875.5 693.8,872 C694,870.5 692.5,870.5 692.5,872 C692.8,876 696,880.5 700.5,881.5 C702,881.8 701.8,880.2 700.5,880.2 C696,880 690.5,882 688.5,884 Z" fill="none" stroke="#fff" stroke-width="1.3" stroke-linejoin="round"/><path d="M1336.2,882.8 L1343,876 L1349.8,882.8" fill="none" stroke="#e6e6e6" stroke-width="1.2"/><g fill="none" stroke="#e6e6e6" stroke-width="1.2"><path d="M1362,886.5 A14,14 0 0 1 1376,872.5"/><path d="M1365,886.5 A11,11 0 0 1 1376,875.5"/><path d="M1368,886.5 A8,8 0 0 1 1376,878.5"/><path d="M1371,886.5 A5,5 0 0 1 1376,881.5"/></g><circle cx="1374.8" cy="885.3" r="1.3" fill="#e6e6e6"/><g fill="none" stroke="#e6e6e6" stroke-width="1.2"><rect x="1389.5" y="875.5" width="7" height="7" rx="0.8"/><path d="M1396.5,877.5 L1399.5,875.8 V882.2 L1396.5,880.5"/><path d="M1388.5,874 A8,8 0 0 1 1399.5,874 M1388.5,884.5 A8,8 0 0 0 1399.5,884.5"/></g><g fill="none" stroke="#e6e6e6" stroke-width="1.2"><path d="M1410.2,876.5 H1413 L1417.5,872.2 V886 L1413,881.5 H1410.2 Z"/><path d="M1420,876 A4.5,4.5 0 0 1 1420,882"/><path d="M1422.5,874 A7.5,7.5 0 0 1 1422.5,884"/><path d="M1425,872 A10.5,10.5 0 0 1 1425,886"/></g><path d="M1557.6,871 H1574 V884.5 H1568.5 L1565.8,887.3 L1563.1,884.5 H1557.6 Z" fill="none" stroke="#e6e6e6" stroke-width="1.2"/></svg>
</body></html>
